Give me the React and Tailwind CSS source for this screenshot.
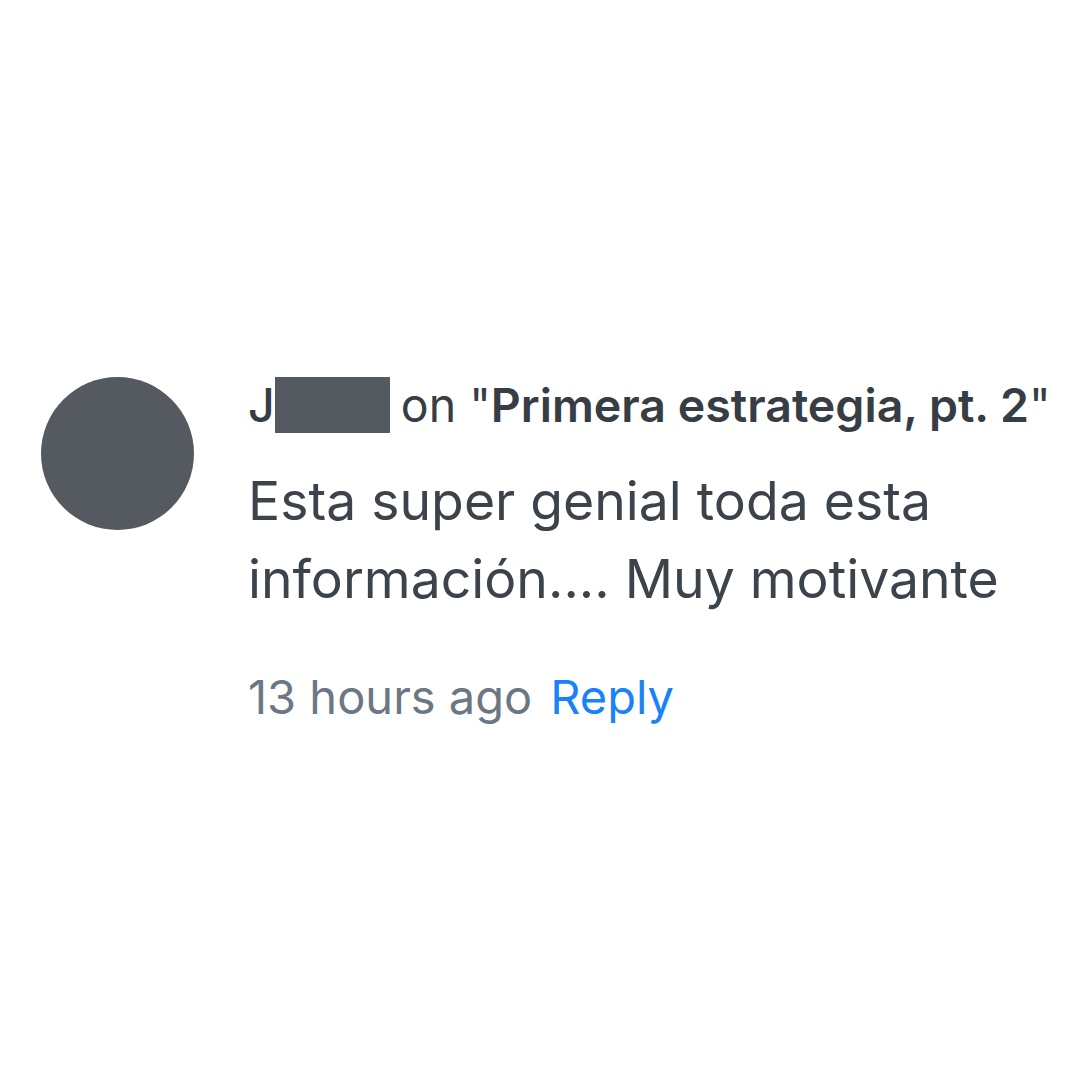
import React from "react";

const Comment = () => {
  return (
    <div className="flex items-start gap-[54px]">
      <div className="w-[153px] h-[153px] rounded-full bg-[#555a60] shrink-0" />
      <div className="flex flex-col">
        <div className="flex items-center h-[56px] text-[46.5px] text-[#373d45] leading-none">
          <span className="font-medium">J</span>
          <span className="w-[115px] h-[56px] bg-[#555a60] mr-[11px]" />
          <span>
            on "<span className="font-semibold">Primera estrategia, pt. 2</span>"
          </span>
        </div>
        <p className="mt-[29px] text-[53.5px] leading-[78px] text-[#3d434b] w-[790px]">
          Esta super genial toda esta información.... Muy motivante
        </p>
        <div className="mt-[55px] text-[47px] leading-none flex gap-[18px]">
          <span className="text-[#6b7785]">13 hours ago</span>
          <span className="text-[#1a82f7]">Reply</span>
        </div>
      </div>
    </div>
  );
};

export default function App() {
  return (
    <div
      className="w-[1080px] h-[1080px] bg-white pl-[41px] pt-[377px]"
      style={{ fontFamily: "Inter, 'Noto Sans', sans-serif" }}
    >
      <Comment />
    </div>
  );
}
